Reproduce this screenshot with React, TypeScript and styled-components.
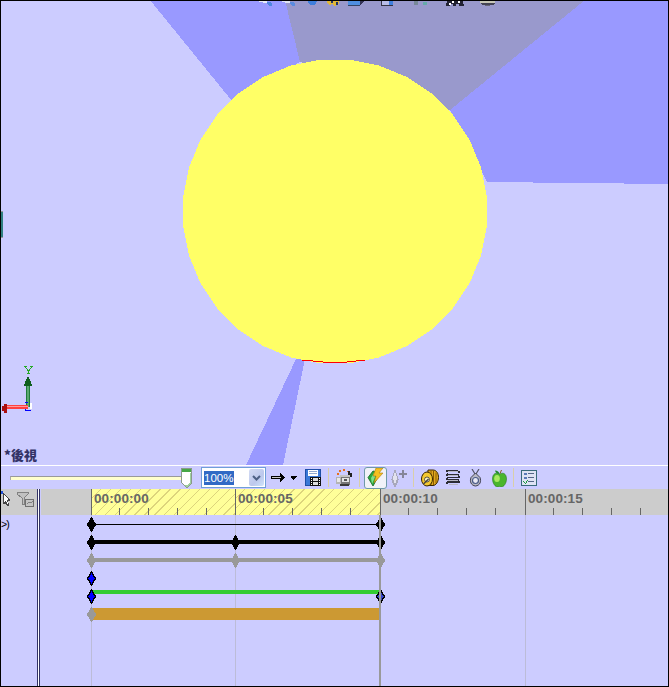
import React from "react";
import styled, { createGlobalStyle } from "styled-components";

const GlobalStyle = createGlobalStyle`
  html, body {
    margin: 0;
    padding: 0;
    background: #ccccff;
    overflow: hidden;
  }
`;

const Page = styled.div`
  width: 669px;
  height: 687px;
  box-sizing: border-box;
  border: 1px solid #000;
  background: #ccccff;
  display: flex;
  flex-direction: column;
  overflow: hidden;
  font-family: "Liberation Sans", Arial, sans-serif;
`;

const Viewport = styled.div`
  position: relative;
  height: 464px;
  flex: none;
`;

const SceneSvg = styled.svg`
  display: block;
`;

const ViewLabel = styled.div`
  position: absolute;
  left: 3px;
  top: 446px;
  font: 900 13px/16px "Noto Sans CJK TC", "Noto Sans", sans-serif;
  color: #333366;
`;

const Toolbar = styled.div`
  flex: none;
  height: 23px;
  border-top: 1px solid #fff;
  display: flex;
  align-items: center;
`;

const Slot = styled.div<{ $ml: number; $w: number }>`
  flex: none;
  display: flex;
  align-items: center;
  justify-content: center;
  margin-left: ${({ $ml }) => $ml}px;
  width: ${({ $w }) => $w}px;
  svg {
    display: block;
  }
`;

const Separator = styled.div<{ $ml: number }>`
  flex: none;
  width: 1px;
  height: 19px;
  margin-left: ${({ $ml }) => $ml}px;
  background: #d9cfa8;
`;

const Slider = styled.div`
  flex: none;
  position: relative;
  width: 182px;
  height: 21px;
  margin-left: 9px;
`;

const SliderRail = styled.div`
  position: absolute;
  left: 0;
  right: 4px;
  top: 9px;
  height: 3px;
  background: #ffffcc;
  border-top: 1px solid #999999;
  border-left: 1px solid #aaaaaa;
`;

const SliderThumb = styled.svg`
  position: absolute;
  right: 0;
  top: 1px;
`;

const Combo = styled.div`
  flex: none;
  box-sizing: border-box;
  width: 65px;
  height: 21px;
  margin-left: 9px;
  border: 1px solid #6f9fd8;
  background: #fff;
  display: flex;
  align-items: center;
  padding: 0 1px 0 2px;
`;

const ComboText = styled.span`
  background: #316ac5;
  color: #fff;
  font-size: 11.5px;
  line-height: 14px;
  width: 30px;
`;

const ComboButton = styled.div`
  margin-left: auto;
  width: 15px;
  height: 17px;
  border-radius: 2px;
  background: linear-gradient(135deg, #d4dcf4 0%, #bcc8ec 60%, #cfe4fb 100%);
  display: flex;
  align-items: center;
  justify-content: center;
`;

const ToggleButton = styled.div`
  flex: none;
  box-sizing: border-box;
  width: 23px;
  height: 22px;
  margin-left: 4px;
  border: 1px solid #6f9aa8;
  border-radius: 3px;
  background: #f1f2f8;
  display: flex;
  align-items: center;
  justify-content: center;
`;

const Timeline = styled.div`
  flex: 1;
  min-height: 0;
  display: flex;
`;

const LeftPanel = styled.div`
  flex: none;
  width: 36px;
  display: flex;
  flex-direction: column;
  overflow: hidden;
`;

const LeftHeader = styled.div`
  flex: none;
  height: 26px;
  background: #cccccc;
  display: flex;
  align-items: flex-start;
  gap: 6px;
  padding-top: 2px;
  box-sizing: border-box;
`;

const TrackName = styled.div`
  height: 18px;
  font-size: 10.5px;
  letter-spacing: -1px;
  line-height: 19px;
  color: #000;
  white-space: nowrap;
`;

const Divider = styled.div`
  flex: none;
  width: 1px;
  margin-right: 1px;
  border-left: 1px solid #333366;
  border-right: 1px solid #333366;
  background: #fff;
  box-sizing: content-box;
`;

const RightColumn = styled.div`
  flex: 1;
  min-width: 0;
  display: flex;
  flex-direction: column;
`;

const Ruler = styled.div`
  flex: none;
  height: 26px;
  display: flex;
  background: #cccccc;
  overflow: hidden;
`;

const RulerLead = styled.div`
  flex: none;
  width: 50px;
`;

const RulerCell = styled.div<{ $w: number; $active?: boolean }>`
  flex: none;
  box-sizing: border-box;
  width: ${({ $w }) => $w}px;
  height: 26px;
  padding: 3px 0 0 2px;
  border-left: 1px solid #666666;
  font: bold 13.5px/14px "Liberation Sans", Arial, sans-serif;
  letter-spacing: 0.1px;
  color: #666666;
  background:
    repeating-linear-gradient(90deg, transparent 0 27.92px, #666666 27.92px 28.92px) -1px bottom / 100% 7px no-repeat
    ${({ $active }) =>
      $active
        ? ", repeating-linear-gradient(135deg, #ffff99 0 6px, #dcd47c 6px 7px)"
        : ""};
`;

const Tracks = styled.div`
  position: relative;
  flex: 1;
  min-height: 0;
`;

const Guide = styled.div<{ $x: number; $strong?: boolean }>`
  position: absolute;
  top: 0;
  bottom: 0;
  left: ${({ $x }) => $x - 41}px;
  width: ${({ $strong }) => ($strong ? 2 : 1)}px;
  background: ${({ $strong }) => ($strong ? "#999999" : "#bcbcd8")};
  z-index: ${({ $strong }) => ($strong ? 3 : 0)};
`;

const TrackRow = styled.div`
  position: relative;
  height: 18px;
`;

const Bar = styled.div<{ $color: string; $top: number; $h: number }>`
  position: absolute;
  left: 50px;
  width: 289px;
  top: ${({ $top }) => $top}px;
  height: ${({ $h }) => $h}px;
  background: ${({ $color }) => $color};
  z-index: 1;
`;

const KeySvg = styled.svg<{ $x: number }>`
  position: absolute;
  top: 2px;
  left: ${({ $x }) => $x - 41 - 4}px;
  z-index: 2;
`;

// half widths per pixel row of the keyframe diamond
const keyOuter = [0, 1, 1, 2, 2, 3, 4, 4, 4, 3, 2, 2, 1, 1, 0];
const keyInner = [-1, -1, 0, 0, 1, 1, 2, 3, 2, 1, 1, 0, 0, -1, -1];

const rowsToPath = (rows: number[]) =>
  rows
    .map((hw, y) => (hw < 0 ? "" : `M${4 - hw} ${y}h${hw * 2 + 1}v1h-${hw * 2 + 1}z`))
    .join("");

type KeyProps = { x: number; fill: string; stroke?: string };

const Key = ({ x, fill, stroke }: KeyProps) => (
  <KeySvg $x={x} width="9" height="15" viewBox="0 0 9 15" shapeRendering="crispEdges">
    <path d={rowsToPath(keyOuter)} fill={stroke ?? fill} />
    {stroke && <path d={rowsToPath(keyInner)} fill={fill} />}
  </KeySvg>
);

const sunPoints = Array.from({ length: 32 }, (_, i) => {
  const a = (i / 32) * Math.PI * 2 + Math.PI / 32;
  return `${(335 + 152.5 * Math.cos(a)).toFixed(1)},${(211.5 + 152.5 * Math.sin(a)).toFixed(1)}`;
}).join(" ");

const Scene = () => (
  <SceneSvg width="667" height="464" viewBox="1 1 667 464" shapeRendering="crispEdges">
    <rect x="0" y="0" width="669" height="465" fill="#ccccff" />
    <polygon points="150,0 232,101 300,62 285,0" fill="#9999ff" />
    <polygon points="285,0 585,0 450,110 300,62" fill="#9999cc" />
    <polygon points="585,0 669,0 669,184 487,182 450,110" fill="#9999ff" />
    <polygon points="296,359 305,359 283,465 246,465" fill="#9999ff" />
    <polygon points={sunPoints} fill="#ffff66" />
    <polyline points="302,360 318,361.500 327,362.500 343,362.500 352,361.500 365,360" fill="none" stroke="#ff0000" strokeWidth="1" />
    {/* clipped icons of the toolbar above */}
    <g>
      <path d="M259 1h7l2 2h4v3h-3l-3-3h-3l-1-1h-3z" fill="#e8ecf8" />
      <path d="M267 2h3l2 2v2h-3l-2-3z" fill="#4f86e0" />
      <path d="M282 1h7l2 2h4v3h-3l-3-3h-3l-2-1h-2z" fill="#dfe4f4" />
      <path d="M290 2h3l2 2v2h-3l-2-3z" fill="#5a8ce0" />
      <path d="M308 1h9l-1 3-2 1h-3l-2-1z" fill="#3f7fdc" />
      <path d="M327 1h12v3h-3v2h-2l-2-2-2 1h-1l-2-2z" fill="#e0b838" />
      <path d="M331 1h2v2h-2zM336 2h2v3h-2z" fill="#223366" />
      <rect x="348" y="1" width="12" height="4" fill="#4f8fe0" />
      <rect x="348" y="5" width="12" height="1" fill="#334466" />
      <path d="M360 1h4l-4 5z" fill="#333355" />
      <rect x="381" y="1" width="1" height="5" fill="#334" />
      <rect x="381" y="5" width="12" height="1" fill="#334" />
      <rect x="382" y="1" width="7" height="4" fill="#b8bce8" />
      <rect x="389" y="1" width="4" height="4" fill="#3f7fdc" />
      <rect x="414" y="1" width="4" height="4" fill="#778899" />
      <rect x="423" y="2" width="4" height="3" fill="#66aaaa" />
      <path d="M447 1h16l1 5h-5v-2h-3v2h-3v-2h-3v2h-4z" fill="#222233" />
      <path d="M452 1h2v2h-2zM458 1h2v2h-2zM449 3h2v2h-2z" fill="#ffffff" />
      <rect x="480" y="1" width="15" height="2" fill="#c8c8b8" />
      <path d="M480 3h16l-3 2h-10z" fill="#444455" />
      <rect x="485" y="5" width="5" height="1" fill="#666677" />
    </g>
    {/* side handle */}
    <rect x="1" y="211" width="2" height="27" fill="#2f7f7f" />
    <rect x="1" y="211" width="2" height="1" fill="#999999" />
    <rect x="1" y="237" width="2" height="1" fill="#999999" />
    {/* axis triad */}
    <g>
      <path d="M24 366h3v1h-1v1h1v1h1v1h1v-1h1v-1h1v-1h-1v-1h3v1h-1v1h-1v1h-1v2h-1v2h1v1h-3v-1h1v-2h-1v-2h-1v-1h-1v-1h-1z" fill="#22aa22" />
      <rect x="26" y="385" width="4" height="22" fill="#1f7a3c" />
      <rect x="27" y="385" width="2" height="22" fill="#5aa870" />
      <path d="M28 377h1v2h1v2h1v3h1v2h-8v-2h1v-3h1v-2h1v-2z" fill="#0f5f1f" />
      <rect x="6" y="405" width="22" height="4" fill="#ff4040" />
      <rect x="6" y="406" width="22" height="1" fill="#ff9a9a" />
      <path d="M2 406h2v-2h3v9h-3v-2H2z" fill="#aa0f0f" />
      <rect x="25" y="402" width="3" height="1" fill="#0000ff" />
      <rect x="25" y="410" width="6" height="1" fill="#0000ff" />
      <rect x="25" y="409" width="1" height="2" fill="#0000ff" />
      <rect x="30" y="403" width="2" height="6" fill="#ffffff" />
    </g>
  </SceneSvg>
);

const ThumbIcon = () => (
  <SliderThumb width="11" height="20" viewBox="0 0 11 20" shapeRendering="crispEdges">
    <path d="M0 0h11v15l-5 5h-1l-5-5z" fill="#8a9a8a" />
    <path d="M1 1h9v14l-4 4h-1l-4-4z" fill="#ffffff" />
    <rect x="1" y="1" width="9" height="3" fill="#46a846" />
    <path d="M10 5v10l-4 4h-1l-2-2h3l3-3V5z" fill="#9fd09f" />
  </SliderThumb>
);

const ChevronIcon = () => (
  <svg width="9" height="6" viewBox="0 0 9 6">
    <path d="M1 1l3.5 3.5L8 1" fill="none" stroke="#4d6185" strokeWidth="2" />
  </svg>
);

const ArrowIcon = () => (
  <svg width="15" height="11" viewBox="0 0 15 11" shapeRendering="crispEdges">
    <path d="M0 4h9V1h1v1h1v1h1v1h1v1h1v1h-1v1h-1v1h-1v1h-1v1H9V7H0z" fill="#000" />
    <rect x="1" y="5" width="9" height="1" fill="#c8c8c8" />
  </svg>
);

const CaretIcon = () => (
  <svg width="6" height="4" viewBox="0 0 6 4" shapeRendering="crispEdges">
    <path d="M0 0h6v1H5v1H4v1H3v1H2V3H1V2H0z" fill="#000" />
  </svg>
);

const SaveIcon = () => (
  <svg width="16" height="17" viewBox="0 0 16 17" shapeRendering="crispEdges">
    <rect width="16" height="17" fill="#1f4fa8" />
    <rect x="1" y="1" width="14" height="15" fill="#3a78d8" />
    <rect x="3" y="1" width="10" height="6" fill="#ffffff" />
    <path d="M4 2h8v1H4zM4 4h8v1H4z" fill="#8fa8d0" />
    <rect x="5" y="8" width="11" height="9" fill="#111111" />
    <path d="M6 9h1v1H6zM6 11h1v1H6zM6 13h1v1H6zM6 15h1v1H6zM14 9h1v1h-1zM14 11h1v1h-1zM14 13h1v1h-1zM14 15h1v1h-1z" fill="#ffffff" />
    <path d="M8 9h5v3H8zM8 13h5v3H8z" fill="#dddddd" />
  </svg>
);

const CameraIcon = () => (
  <svg width="17" height="18" viewBox="0 0 17 18" shapeRendering="crispEdges">
    <path d="M3 1h2v2H3zM7 0h2v2H7zM1 4h2v2H1zM11 2h1v1h-1z" fill="#e8701c" />
    <path d="M12 2h2v2h2v4h-2V6h-2z" fill="#222222" />
    <rect x="4" y="6" width="10" height="10" fill="#777777" />
    <rect x="4" y="6" width="10" height="2" fill="#c4c4c4" />
    <rect x="0" y="8" width="5" height="7" fill="#b4b4b4" />
    <rect x="1" y="9" width="3" height="4" fill="#e8e8e8" />
    <rect x="6" y="9" width="7" height="4" fill="#e4e4e4" />
    <rect x="8" y="10" width="3" height="2" fill="#555555" />
    <rect x="4" y="15" width="9" height="2" fill="#3a3a3a" />
  </svg>
);

const BoltIcon = () => (
  <svg width="17" height="19" viewBox="0 0 17 19">
    <path d="M6 3L1 9.500l5 8.500 5-9-1-5z" fill="#2aa83a" stroke="#0f5f1f" strokeWidth="0.8" />
    <path d="M4 10l3-5 1 4-3 7z" fill="#7fe08a" />
    <path d="M9 0h7l-4 5h4L7 15l2-7H6z" fill="#f5c020" stroke="#b07a10" strokeWidth="0.6" />
  </svg>
);

const DiamondPlusIcon = () => (
  <svg width="18" height="18" viewBox="0 0 18 18" shapeRendering="crispEdges">
    <path d="M4 1h2v3h1v3h1v3h1v1H8v3H7v2H6v2H4v-2H3v-2H2v-3H1v-1h1V7h1V4h1z" fill="#a8a8bc" />
    <path d="M4 4h2v3h1v4H6v3H4v-3H3V7h1z" fill="#e2e2ee" />
    <path d="M12 1h2v3h3v2h-3v3h-2V6H9V4h3z" fill="#85859a" />
  </svg>
);

const RollIcon = () => (
  <svg width="18" height="18" viewBox="0 0 18 18">
    <path d="M7 1h5c3.500 0 5.500 3.500 5.500 7.500S15 16.500 12 16.500H6z" fill="#e0a820" stroke="#3a2600" strokeWidth="1" />
    <path d="M10 2v14M12.500 2v14M15 3.500v11" stroke="#8a5a00" strokeWidth="1" />
    <ellipse cx="6" cy="10" rx="5.500" ry="7" fill="#f4c830" stroke="#3a2600" strokeWidth="1" />
    <circle cx="6" cy="10.500" r="2.500" fill="#fff6c0" stroke="#333" strokeWidth="0.8" />
    <path d="M2.500 15l5-5" stroke="#444" strokeWidth="1.400" />
  </svg>
);

const SpringIcon = () => (
  <svg width="14" height="17" viewBox="0 0 14 17" shapeRendering="crispEdges">
    <path d="M0 1h12v1h2v2H2v1h11v2h1v2H2v1h11v2h1v2H2v1H0v-2h1v-1h11v-1H0V9h1V8h11V7H0V5h1V4h11V3H0z" fill="#2c2c34" />
    <path d="M2 2h10v1H2zM2 6h10v1H2zM2 11h10v1H2zM3 15h9v1H3z" fill="#b8b8c4" />
  </svg>
);

const MedalIcon = () => (
  <svg width="13" height="18" viewBox="0 0 13 18">
    <path d="M3 0l3 5h1l3-5" fill="none" stroke="#556" strokeWidth="1.200" />
    <path d="M6.500 4L11 8.500c1.500 4 0 8-4.500 8.500C2 16.500.5 12.500 2 8.500z" fill="#b8b8c4" stroke="#333344" strokeWidth="0.900" />
    <circle cx="6.500" cy="11.500" r="3" fill="#e8e8f4" stroke="#4a5a88" strokeWidth="1.200" />
  </svg>
);

const AppleIcon = () => (
  <svg width="15" height="18" viewBox="0 0 15 18">
    <path d="M7.500 5C4 3 .5 4.500.5 10c0 4.500 3 8 5 8 1 0 1.500-.5 2-.5s1 .5 2 .5c2 0 5-3.500 5-8C14.500 4.500 11 3 7.500 5z" fill="#4ab52e" stroke="#1f6a1a" strokeWidth="0.500" />
    <ellipse cx="5" cy="9.500" rx="2.800" ry="3.500" fill="#a8ea60" />
    <path d="M7.500 5C7 3 5.500 1.500 3 1.500 3.500 3.500 5 5 7.500 5z" fill="#1f8a2a" />
    <path d="M8 4.500L9.500 1" stroke="#8a5a20" strokeWidth="1" />
  </svg>
);

const ChecklistIcon = () => (
  <svg width="16" height="16" viewBox="0 0 16 16" shapeRendering="crispEdges">
    <rect width="16" height="16" fill="#3a6a7a" />
    <rect x="1" y="1" width="14" height="14" fill="#dfe3f4" />
    <path d="M3 3h3v2H3zM3 7h3v2H3z" fill="#5a7ab8" />
    <path d="M7 3h6v1H7zM7 7h6v1H7zM7 11h6v1H7z" fill="#556688" />
    <path d="M2 11h1v1h1v1h1v-2h1v-1h1v1H6v2H5v1H4v-1H3v-1H2z" fill="#1f9a3f" />
  </svg>
);

const CursorIcon = () => (
  <svg width="10" height="17" viewBox="0 0 10 17" shapeRendering="crispEdges">
    <rect x="0" y="0" width="2" height="3" fill="#1f4fd8" />
    <path d="M2 2h1v1h1v1h1v1h1v1h1v1h1v1h1v2H7l1 3v2H6l-1-3-1 1H2z" fill="#444444" />
    <path d="M3 4h1v1h1v1h1v1h1v2H6l1 4H6L5 9l-2 2z" fill="#ffffff" />
  </svg>
);

const FilterIcon = () => (
  <svg width="18" height="18" viewBox="0 0 18 18" shapeRendering="crispEdges">
    <path d="M0 1h11v2L7 7v6H5V7L0 3z" fill="#c0c0c0" stroke="#808080" strokeWidth="1" />
    <rect x="8.500" y="8.500" width="8" height="7" fill="#c4c4c4" stroke="#707070" strokeWidth="1" />
    <path d="M10 13l2-2 2 1 2-2" fill="none" stroke="#808080" strokeWidth="1" />
  </svg>
);

export default function App() {
  return (
    <Page>
      <GlobalStyle />
      <Viewport>
        <Scene />
        <ViewLabel>*後視</ViewLabel>
      </Viewport>
      <Toolbar>
        <Slider>
          <SliderRail />
          <ThumbIcon />
        </Slider>
        <Combo>
          <ComboText>100%</ComboText>
          <ComboButton>
            <ChevronIcon />
          </ComboButton>
        </Combo>
        <Slot $ml={5} $w={15}><ArrowIcon /></Slot>
        <Slot $ml={5} $w={6}><CaretIcon /></Slot>
        <Slot $ml={8} $w={16}><SaveIcon /></Slot>
        <Separator $ml={7} />
        <Slot $ml={7} $w={17}><CameraIcon /></Slot>
        <Separator $ml={6} />
        <ToggleButton><BoltIcon /></ToggleButton>
        <Slot $ml={3} $w={18}><DiamondPlusIcon /></Slot>
        <Separator $ml={5} />
        <Slot $ml={7} $w={18}><RollIcon /></Slot>
        <Slot $ml={7} $w={14}><SpringIcon /></Slot>
        <Slot $ml={9} $w={13}><MedalIcon /></Slot>
        <Slot $ml={10} $w={15}><AppleIcon /></Slot>
        <Separator $ml={6} />
        <Slot $ml={7} $w={16}><ChecklistIcon /></Slot>
      </Toolbar>
      <Timeline>
        <LeftPanel>
          <LeftHeader>
            <CursorIcon />
            <FilterIcon />
          </LeftHeader>
          <TrackName>&gt;)</TrackName>
        </LeftPanel>
        <Divider />
        <RightColumn>
          <Ruler>
            <RulerLead />
            <RulerCell $w={144} $active>00:00:00</RulerCell>
            <RulerCell $w={145} $active>00:00:05</RulerCell>
            <RulerCell $w={145}>00:00:10</RulerCell>
            <RulerCell $w={145}>00:00:15</RulerCell>
          </Ruler>
          <Tracks>
            <Guide $x={91} />
            <Guide $x={235} />
            <Guide $x={525} />
            <Guide $x={379} $strong />
            <TrackRow>
              <Bar $color="#000000" $top={9} $h={1} />
              <Key x={91} fill="#000000" />
              <Key x={380} fill="#000000" />
            </TrackRow>
            <TrackRow>
              <Bar $color="#000000" $top={7} $h={4} />
              <Key x={91} fill="#000000" />
              <Key x={235} fill="#000000" />
              <Key x={380} fill="#000000" />
            </TrackRow>
            <TrackRow>
              <Bar $color="#999999" $top={7} $h={4} />
              <Key x={91} fill="#999999" />
              <Key x={235} fill="#999999" />
              <Key x={380} fill="#999999" />
            </TrackRow>
            <TrackRow>
              <Key x={91} fill="#0000ff" stroke="#000000" />
            </TrackRow>
            <TrackRow>
              <Bar $color="#33cc33" $top={3} $h={4} />
              <Key x={91} fill="#0000ff" stroke="#000000" />
              <Key x={380} fill="#3344cc" stroke="#000000" />
            </TrackRow>
            <TrackRow>
              <Bar $color="#cc9933" $top={3} $h={12} />
              <Key x={91} fill="#999999" />
            </TrackRow>
          </Tracks>
        </RightColumn>
      </Timeline>
    </Page>
  );
}
